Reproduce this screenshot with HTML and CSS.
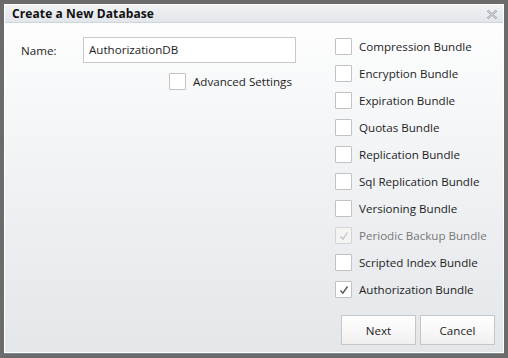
FILE: index.html
```html
<!DOCTYPE html>
<html>
<head>
<meta charset="utf-8">
<link rel="stylesheet" href="styles.css">
</head>
<body>
<div class="frame">
  <div class="dialog">
    <div class="titlebar">
      <span class="title">Create a New Database</span>
      <svg class="close" width="12" height="11" viewBox="0 0 12 11"><path d="M1.5 1.5 L10.5 9.5 M10.5 1.5 L1.5 9.5" stroke="#9aa0a6" stroke-width="2.2" fill="none"/><path d="M1.5 1.5 L10.5 9.5 M10.5 1.5 L1.5 9.5" stroke="#e9ecef" stroke-width="0.8" fill="none"/></svg>
    </div>
    <div class="body">
      <div class="left">
        <div class="name-row">
          <label class="name-label">Name:</label>
          <div class="input">AuthorizationDB</div>
        </div>
        <div class="adv-row">
          <span class="box"></span>
          <span class="lbl">Advanced Settings</span>
        </div>
      </div>
      <div class="right">
        <div class="bundles">
          <div class="check"><span class="box"></span><span class="lbl">Compression Bundle</span></div>
          <div class="check"><span class="box"></span><span class="lbl">Encryption Bundle</span></div>
          <div class="check"><span class="box"></span><span class="lbl">Expiration Bundle</span></div>
          <div class="check"><span class="box"></span><span class="lbl">Quotas Bundle</span></div>
          <div class="check"><span class="box"></span><span class="lbl">Replication Bundle</span></div>
          <div class="check"><span class="box"></span><span class="lbl">Sql Replication Bundle</span></div>
          <div class="check"><span class="box"></span><span class="lbl">Versioning Bundle</span></div>
          <div class="check disabled"><span class="box"><svg width="10" height="10" viewBox="0 0 10 10"><path d="M1.5 5.5 L3.8 8.2 L8.5 1.5" stroke="#c4c4c4" stroke-width="1.3" fill="none"/></svg></span><span class="lbl">Periodic Backup Bundle</span></div>
          <div class="check"><span class="box"></span><span class="lbl">Scripted Index Bundle</span></div>
          <div class="check"><span class="box"><svg width="10" height="10" viewBox="0 0 10 10"><path d="M1.5 5.5 L3.8 8.2 L8.5 1.5" stroke="#555" stroke-width="1.4" fill="none"/></svg></span><span class="lbl">Authorization Bundle</span></div>
        </div>
        <div class="buttons">
          <button class="btn">Next</button>
          <button class="btn">Cancel</button>
        </div>
      </div>
    </div>
  </div>
</div>
</body>
</html>
```
FILE: styles.css
```css
* { box-sizing: border-box; }
html, body { margin: 0; padding: 0; }
body {
  width: 508px;
  height: 358px;
  background: #6b6b6b;
  font-family: "Open Sans", "DejaVu Sans", sans-serif;
  font-size: 11.6px;
  color: #1e1e1e;
}
.frame {
  width: 508px;
  height: 358px;
  padding: 4px 4px 5px 4px;
}
.dialog {
  width: 100%;
  height: 100%;
  border: 1px solid #fff;
  border-bottom-color: #fdfdfd;
  box-shadow: 0 1px 0 #7d8a96;
  background: linear-gradient(#ffffff 0%, #f1f3f5 45%, #e4e7ea 100%);
  display: flex;
  flex-direction: column;
}
.titlebar {
  height: 18px;
  background: linear-gradient(#f0f2f4, #e2e6ea);
  border-bottom: 1px solid #d0d5da;
  display: flex;
  align-items: center;
  justify-content: space-between;
  padding: 0 5px 0 7px;
}
.title {
  font-weight: bold;
  font-size: 12px;
  color: #111;
  letter-spacing: 0.1px;
}
.close { margin-top: 1px; }
.body {
  flex: 1;
  display: flex;
  justify-content: space-between;
  padding: 14px 8px 7px 15px;
}
.left { width: 278px; }
.name-row {
  display: flex;
  align-items: center;
}
.name-label { width: 63px; padding-left: 1px; }
.input {
  width: 213px;
  height: 26px;
  border: 1px solid #c9c9c9;
  background: #fff;
  padding: 0 5px;
  line-height: 24px;
}
.adv-row {
  display: flex;
  align-items: center;
  padding-left: 149px;
  margin-top: 10px;
}
.box {
  width: 17px;
  height: 17px;
  border: 1px solid #c2c2c2;
  border-radius: 1px;
  background: #fff;
  display: inline-flex;
  align-items: center;
  justify-content: center;
  flex: none;
}
.lbl { margin-left: 7px; }
.right {
  width: 161px;
  display: flex;
  flex-direction: column;
}
.bundles { margin-top: -4px; padding-left: 1px; }
.check {
  display: flex;
  align-items: center;
  height: 27px;
}
.check.disabled .lbl { color: #777; }
.check.disabled .box { background: #f4f4f4; border-color: #d4d4d4; }
.buttons {
  margin-top: auto;
  display: flex;
  justify-content: flex-end;
  gap: 4px;
}
.btn {
  width: 75px;
  height: 30px;
  border: 1px solid #c6c6c6;
  background: linear-gradient(#ffffff, #f0f0f0);
  font-family: inherit;
  font-size: 11.6px;
  color: #1e1e1e;
  padding: 0;
}
```
